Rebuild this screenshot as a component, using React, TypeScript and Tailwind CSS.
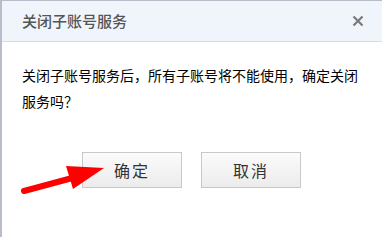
export default function App() {
  return (
    <div
      className="relative w-[382px] h-[237px] bg-white overflow-hidden border-l-2 border-t border-[#b8bdc9]"
      style={{ fontFamily: '"Noto Sans CJK SC", "Liberation Sans", sans-serif' }}
    >
      {/* header */}
      <div className="flex items-center justify-between h-[41px] bg-[#f0f5fc] border-b border-[#d5dbe3] pl-[20px] pr-[18px]">
        <span className="text-[15px] text-[#555] font-medium">关闭子账号服务</span>
        <svg width="12" height="12" viewBox="0 0 12 12">
          <path d="M1.5 1.5 L10.5 10.5 M10.5 1.5 L1.5 10.5" stroke="#7a7a7a" strokeWidth="2.2" />
        </svg>
      </div>

      {/* body */}
      <div className="pl-[20px] pt-[20px] w-[362px]">
        <p className="text-[14px] leading-[26px] text-black">
          关闭子账号服务后，所有子账号将不能使用，确定关闭服务吗？
        </p>
      </div>

      {/* buttons */}
      <div className="flex gap-[19px] pl-[80px] mt-[38px]">
        <button className="w-[100px] h-[36px] border border-[#c8c8c8] bg-gradient-to-b from-[#fbfbfb] to-[#ececec] text-[16px] text-[#333] tracking-[2px]">
          确定
        </button>
        <button className="w-[100px] h-[36px] border border-[#c8c8c8] bg-gradient-to-b from-[#fbfbfb] to-[#ececec] text-[16px] text-[#333] tracking-[2px]">
          取消
        </button>
      </div>

      {/* red arrow annotation */}
      <svg className="absolute -left-[2px] -top-px" width="382" height="237" viewBox="0 0 382 237">
        <line x1="24" y1="191" x2="76" y2="177" stroke="#ff0000" strokeWidth="6" strokeLinecap="round" />
        <polygon points="104,168 66,166 73,189" fill="#ff0000" />
      </svg>
    </div>
  );
}
